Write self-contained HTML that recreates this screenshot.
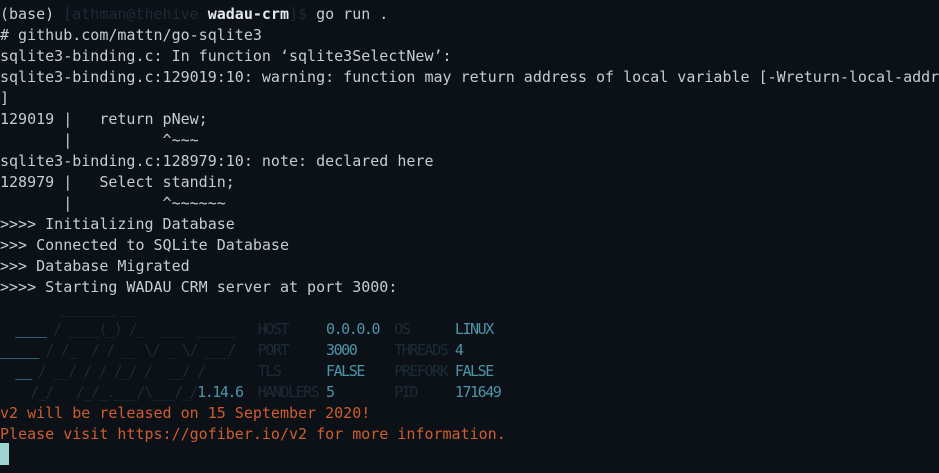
<!DOCTYPE html>
<html><head><meta charset="utf-8"><style>
html,body{margin:0;padding:0;background:#0b1116;width:939px;height:473px;overflow:hidden}
pre{margin:0;position:absolute;left:0;top:4px;font-family:"DejaVu Sans Mono","Liberation Mono",monospace;font-size:15px;line-height:21px;color:#c3ced3;white-space:pre}
.d{color:#1c2b37}.b{color:#e4e9eb;font-weight:bold}.c{color:#4f93a7}.o{color:#cf5d2f}
.ban{position:absolute;left:0;top:319px;font-family:"DejaVu Sans Mono",monospace;font-size:15px;line-height:21px;letter-spacing:-1.45px;white-space:pre;margin:0;color:#1c2b37}
.cur{position:absolute;left:0;top:443px;width:9px;height:22px;background:#9fd3d0}
</style></head><body>
<pre>(base) <span class="d">[athman@thehive</span> <span class="b">wadau-crm</span><span class="d">]$</span> go run .
# github.com/mattn/go-sqlite3
sqlite3-binding.c: In function ‘sqlite3SelectNew’:
sqlite3-binding.c:129019:10: warning: function may return address of local variable [-Wreturn-local-addr
]
129019 |   return pNew;
       |          ^~~~
sqlite3-binding.c:128979:10: note: declared here
128979 |   Select standin;
       |          ^~~~~~~
&gt;&gt;&gt;&gt; Initializing Database
&gt;&gt;&gt; Connected to SQLite Database
&gt;&gt;&gt; Database Migrated
&gt;&gt;&gt;&gt; Starting WADAU CRM server at port 3000:





<span class="o">v2 will be released on 15 September 2020!</span>
<span class="o">Please visit https://gofiber.io/v2 for more information.</span></pre>
<pre class="ban" style="top:298px">        _______ __
  <span class="c">____</span> / ____(_) /_  ___  _____   HOST     <span class="c">0.0.0.0</span>  OS      <span class="c">LINUX</span>
<span class="c">_____</span> / /_  / / __ \/ _ \/ ___/   PORT     <span class="c">3000</span>     THREADS <span class="c">4</span>
  <span class="c">__</span> / __/ / / /_/ /  __/ /       TLS      <span class="c">FALSE</span>    PREFORK <span class="c">FALSE</span>
    /_/   /_/_.___/\___/_/<span class="c">1.14.6</span>  HANDLERS <span class="c">5</span>        PID     <span class="c">171649</span></pre>
<div class="cur"></div>
</body></html>
